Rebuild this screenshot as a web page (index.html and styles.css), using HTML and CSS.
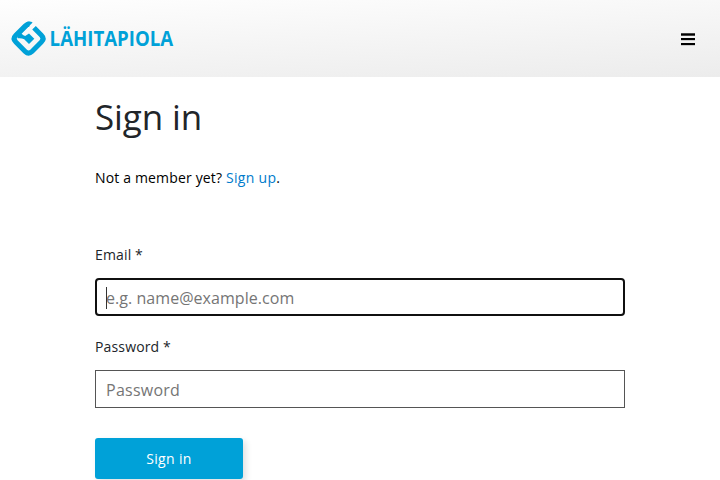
FILE: index.html
```
<!DOCTYPE html>
<html lang="en">
<head>
<meta charset="utf-8">
<title>Sign in</title>
<link rel="stylesheet" href="styles.css">
</head>
<body>
<header class="header">
  <a class="brand" href="#">
    <svg class="brand-logo" viewBox="0 0 190 40">
      <g transform="translate(0 2)">
        <path d="M18.5 3.2Q16.1 3 14.4 4.7L4.8 14.2Q1.4 17.6 4.8 21L14.2 30.5Q17.6 33.8 21 30.5L30.4 21Q33.8 17.6 30.4 14.2L23 6.8" fill="none" stroke="#00a1d8" stroke-width="5"/>
        <path d="M16.5.6Q20 .1 21.6 1.5L10.6 12.7Q12.4 14.8 14.2 15L18 12.4L23.3 17.7L18 23L13.2 18.2Q10.5 16.8 6.5 17.3V10.5Z" fill="#00a1d8"/>
      </g>
      <text class="brand-name" x="38.6" y="26.6" textLength="123.6" lengthAdjust="spacingAndGlyphs">LÄHITAPIOLA</text>
    </svg>
  </a>
  <button class="menu" aria-label="Menu"><span></span><span></span><span></span></button>
</header>
<main class="content">
  <h1 class="title">Sign in</h1>
  <p class="signup">Not a member yet? <a href="#">Sign up</a>.</p>
  <form class="form">
    <label class="label" for="email">Email *</label>
    <div class="field field-active"><span class="caret"></span><input id="email" type="text" placeholder="e.g. name@example.com"></div>
    <label class="label" for="password">Password *</label>
    <div class="field"><input id="password" type="password" placeholder="Password"></div>
    <button class="submit" type="button">Sign in</button>
  </form>
</main>
</body>
</html>
```
FILE: styles.css
```
* { box-sizing: border-box; }
html { height: 100%; overflow: hidden; }
body {
  margin: 0;
  height: 100%;
  overflow: hidden;
  background: #fff;
  color: #212529;
  font-family: "Open Sans", sans-serif;
  font-size: 14px;
}
.header {
  display: flex;
  align-items: center;
  justify-content: space-between;
  height: 77px;
  padding: 0 25px 0 11px;
  background: linear-gradient(177deg, #fefefe 0%, #ececec 100%);
}
.brand { display: flex; text-decoration: none; }
.brand-logo { width: 190px; height: 40px; overflow: visible; }
.brand-name {
  fill: #00a1d8;
  font-family: "Open Sans", sans-serif;
  font-size: 20.5px;
  font-weight: 700;
}
.menu {
  display: flex;
  flex-direction: column;
  gap: 2px;
  width: 14px;
  margin-top: 1px;
  padding: 0;
  border: 0;
  background: none;
}
.menu span {
  width: 14px;
  height: 3px;
  border-bottom: 1px solid #ccc;
  background: #000;
}
.menu span:first-child { border-top: 1px solid #444; border-bottom-color: #444; }
.content { width: 530px; margin: 0 auto; }
.title {
  margin: 19px 0 0;
  font-size: 35px;
  font-weight: 400;
  line-height: 42px;
  letter-spacing: -.1px;
}
.signup {
  margin: 29px 0 0;
  color: #000;
  line-height: 21px;
  letter-spacing: .16px;
}
.signup a { color: #007bcb; text-decoration: none; letter-spacing: .3px; }
.form { margin-top: 56px; }
.label { display: block; height: 34px; line-height: 21px; letter-spacing: .15px; }
.field {
  position: relative;
  height: 38px;
  margin-bottom: 20px;
  padding: 0 10px;
  border: 1px solid #555;
}
.field-active { padding: 0 9px; border: 2px solid #101010; border-radius: 4px; }
.field input {
  display: block;
  width: 100%;
  height: 100%;
  padding: 2px 0 0;
  border: 0;
  outline: 0;
  background: none;
  font: 16px "Open Sans", sans-serif;
  letter-spacing: .25px;
}
.field-active input { letter-spacing: .05px; }
.field input::placeholder { color: #757575; }
.caret {
  position: absolute;
  left: 9px;
  top: 7px;
  width: 1px;
  height: 22px;
  background: #333;
}
.submit {
  width: 148px;
  height: 41px;
  margin-top: 10px;
  padding: 0;
  border: 0;
  border-radius: 3px;
  background: #00a1d8;
  box-shadow: 3px 3px 6px rgba(0, 0, 0, .12);
  color: #fff;
  font: 14px "Open Sans", sans-serif;
  letter-spacing: .35px;
}
```
